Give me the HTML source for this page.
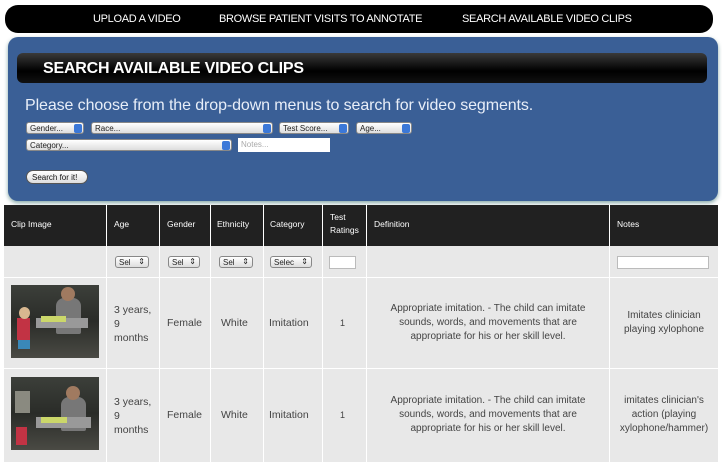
<!DOCTYPE html>
<html><head><style>
*{box-sizing:border-box;margin:0;padding:0}
body{width:722px;height:469px;background:#fff;font-family:"Liberation Sans",sans-serif;position:relative;overflow:hidden}
.a{position:absolute}
.nav{left:5px;top:5px;width:708px;height:28px;background:#000;border-radius:13px;color:#fff;font-size:11px;letter-spacing:-.3px}
.nav span{position:absolute;top:8px}
.panel{left:8px;top:37px;width:710px;height:164px;background:#3a5f96;border-radius:10px;box-shadow:0 2px 4px #8aa}
.title{left:17px;top:53px;width:690px;height:30px;border-radius:6px;background:linear-gradient(#3a3a3a,#000 60%,#111);color:#fff;font-size:16px;padding:7px 0 0 26px;letter-spacing:-.2px;font-weight:bold}
.sel{height:12px;background:linear-gradient(#fff,#ddd);border-radius:3px;font-size:8px;color:#222;padding:1px 3px;border:1px solid #888}
.sel i{position:absolute;right:1px;top:1px;width:8px;height:9px;background:#3b78d8;border-radius:2px}
.sel b{position:absolute;right:3px;top:0;font-size:8px;font-weight:normal}
.th{background:#212121;color:#fff;font-size:8.5px}
.cell{color:#444;font-size:10.5px}
.img{background:linear-gradient(180deg,#3c3f3a,#2a2c28 50%,#4a4a44);overflow:hidden}
</style></head><body>
<div class="a nav"><span style="left:88px">UPLOAD A VIDEO</span><span style="left:214px">BROWSE PATIENT VISITS TO ANNOTATE</span><span style="left:457px">SEARCH AVAILABLE VIDEO CLIPS</span></div>
<div class="a panel"></div>
<div class="a title">SEARCH AVAILABLE VIDEO CLIPS</div>
<div class="a" style="left:25px;top:97px;color:#e8eef8;font-size:16px;letter-spacing:-.1px">Please choose from the drop-down menus to search for video segments.</div>
<div class="a sel" style="left:26px;top:122px;width:58px">Gender...<i></i></div>
<div class="a sel" style="left:91px;top:122px;width:182px">Race...<i></i></div>
<div class="a sel" style="left:279px;top:122px;width:70px">Test Score...<i></i></div>
<div class="a sel" style="left:356px;top:122px;width:56px">Age...<i></i></div>
<div class="a sel" style="left:26px;top:139px;width:206px">Category...<i></i></div>
<div class="a" style="left:238px;top:138px;width:92px;height:14px;background:#fff;font-size:8px;color:#aaa;padding:2px 3px">Notes...</div>
<div class="a" style="left:26px;top:170px;width:62px;height:14px;background:linear-gradient(#fff,#ddd);border-radius:7px;border:1px solid #555;font-size:8px;padding:2px 5px;color:#111">Search for it!</div>

<div class="a" style="left:4px;top:205px;width:714px;height:257px;background:#e8e8e8"></div>
<div class="a th" style="left:4px;top:205px;width:714px;height:41px"></div>
<div class="a th" style="left:11px;top:219px">Clip Image</div>
<div class="a th" style="left:114px;top:219px">Age</div>
<div class="a th" style="left:167px;top:219px">Gender</div>
<div class="a th" style="left:217px;top:219px">Ethnicity</div>
<div class="a th" style="left:270px;top:219px">Category</div>
<div class="a th" style="left:330px;top:211px;line-height:13px">Test<br>Ratings</div>
<div class="a th" style="left:374px;top:219px">Definition</div>
<div class="a th" style="left:617px;top:219px">Notes</div>
<div class="a" style="left:106px;top:205px;width:1px;height:257px;background:#fff"></div>
<div class="a" style="left:159px;top:205px;width:1px;height:257px;background:#fff"></div>
<div class="a" style="left:210px;top:205px;width:1px;height:257px;background:#fff"></div>
<div class="a" style="left:263px;top:205px;width:1px;height:257px;background:#fff"></div>
<div class="a" style="left:322px;top:205px;width:1px;height:257px;background:#fff"></div>
<div class="a" style="left:366px;top:205px;width:1px;height:257px;background:#fff"></div>
<div class="a" style="left:609px;top:205px;width:1px;height:257px;background:#fff"></div>
<div class="a" style="left:4px;top:277px;width:714px;height:1px;background:#fff"></div>
<div class="a" style="left:4px;top:368px;width:714px;height:1px;background:#fff"></div>
<div class="a sel" style="left:115px;top:256px;width:34px">Sel<b>&#8661;</b></div>
<div class="a sel" style="left:168px;top:256px;width:32px">Sel<b>&#8661;</b></div>
<div class="a sel" style="left:219px;top:256px;width:34px">Sel<b>&#8661;</b></div>
<div class="a sel" style="left:270px;top:256px;width:42px">Selec<b>&#8661;</b></div>
<div class="a" style="left:329px;top:256px;width:27px;height:13px;background:#fff;border:1px solid #bbb"></div>
<div class="a" style="left:617px;top:256px;width:92px;height:13px;background:#fff;border:1px solid #bbb"></div>
<div class="a img" style="left:11px;top:285px;width:88px;height:73px">
 <div class="a" style="left:45px;top:13px;width:25px;height:36px;background:#777;border-radius:8px 8px 2px 2px"></div>
 <div class="a" style="left:50px;top:2px;width:14px;height:14px;background:#a07a60;border-radius:50%"></div>
 <div class="a" style="left:25px;top:33px;width:52px;height:10px;background:#999"></div>
 <div class="a" style="left:30px;top:31px;width:25px;height:6px;background:#cbd76a"></div>
 <div class="a" style="left:6px;top:33px;width:13px;height:22px;background:#c23344"></div>
 <div class="a" style="left:7px;top:55px;width:12px;height:9px;background:#3a88b8"></div>
 <div class="a" style="left:8px;top:22px;width:11px;height:12px;background:#d8b890;border-radius:50%"></div>
</div>
<div class="a img" style="left:11px;top:377px;width:88px;height:73px">
 <div class="a" style="left:50px;top:20px;width:25px;height:34px;background:#777;border-radius:8px 8px 2px 2px"></div>
 <div class="a" style="left:55px;top:9px;width:14px;height:14px;background:#a07a60;border-radius:50%"></div>
 <div class="a" style="left:4px;top:14px;width:15px;height:22px;background:#8a8a80"></div>
 <div class="a" style="left:25px;top:40px;width:55px;height:11px;background:#999"></div>
 <div class="a" style="left:30px;top:40px;width:26px;height:6px;background:#cbd76a"></div>
 <div class="a" style="left:5px;top:50px;width:11px;height:18px;background:#c23344"></div>
</div>
<div class="a cell" style="left:114px;top:303px;line-height:14px">3 years,<br>9<br>months</div>
<div class="a cell" style="left:167px;top:317px">Female</div>
<div class="a cell" style="left:221px;top:317px">White</div>
<div class="a cell" style="left:269px;top:317px">Imitation</div>
<div class="a cell" style="left:340px;top:318px;font-size:9px">1</div>
<div class="a cell" style="left:380px;top:302px;width:216px;text-align:center;line-height:14px;font-size:10px">Appropriate imitation. - The child can imitate sounds, words, and movements that are appropriate for his or her skill level.</div>
<div class="a cell" style="left:616px;top:309px;width:96px;text-align:center;line-height:14px;font-size:10px">Imitates clinician playing xylophone</div>

<div class="a cell" style="left:114px;top:395px;line-height:14px">3 years,<br>9<br>months</div>
<div class="a cell" style="left:167px;top:409px">Female</div>
<div class="a cell" style="left:221px;top:409px">White</div>
<div class="a cell" style="left:269px;top:409px">Imitation</div>
<div class="a cell" style="left:340px;top:410px;font-size:9px">1</div>
<div class="a cell" style="left:380px;top:394px;width:216px;text-align:center;line-height:14px;font-size:10px">Appropriate imitation. - The child can imitate sounds, words, and movements that are appropriate for his or her skill level.</div>
<div class="a cell" style="left:610px;top:394px;width:108px;text-align:center;line-height:14px;font-size:10px">imitates clinician's action (playing xylophone/hammer)</div>
</body></html>
